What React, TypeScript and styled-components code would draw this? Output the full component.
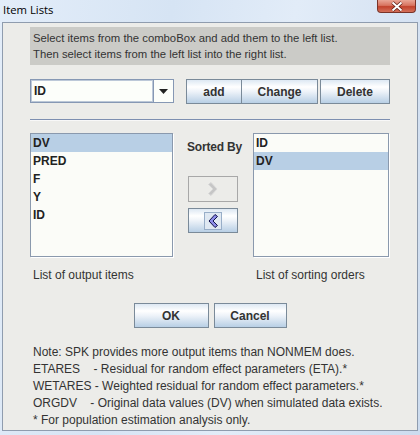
import React from "react";
import styled, { createGlobalStyle } from "styled-components";

const GlobalStyle = createGlobalStyle`
  html, body { margin: 0; padding: 0; }
  body {
    width: 420px; height: 435px; overflow: hidden;
    font-family: "Liberation Sans", Arial, sans-serif;
  }
`;

const Window = styled.div`
  width: 420px;
  height: 435px;
  box-sizing: border-box;
  padding: 0 2px 4px 2px;
  display: flex;
  flex-direction: column;
  background: linear-gradient(100deg, #e3edf9 0%, #d6e4f4 35%, #e2ecf8 60%, #cddcef 100%);
`;

const TitleBar = styled.div`
  height: 22px;
  display: flex;
  align-items: flex-start;
`;

const Title = styled.span`
  font-family: "Open Sans", "Noto Sans", sans-serif;
  font-size: 11.3px;
  line-height: 17px;
  padding: 1px 0 0 1px;
  color: #000;
`;

const CloseButton = styled.div`
  margin-left: auto;
  margin-right: 2px;
  width: 39px;
  height: 13px;
  box-sizing: border-box;
  border: 1px solid #7a3328;
  border-top: none;
  border-radius: 0 0 4px 4px;
  background: linear-gradient(#e9a696 0%, #d87460 45%, #c2422c 55%, #d4705a 100%);
  display: flex;
  align-items: center;
  justify-content: center;
`;

const Panel = styled.div`
  flex: 1;
  box-sizing: border-box;
  border: 1px solid #8f9cae;
  background: #ecece9;
  padding: 4px 27px 0 27px;
  display: flex;
  flex-direction: column;
  color: #333333;
  font-size: 12px;
`;

const Instructions = styled.div`
  height: 38px;
  box-sizing: border-box;
  background: #cbcbc7;
  padding: 3px 0 0 3px;
  font-size: 11.3px;
  line-height: 16px;
`;

const ComboRow = styled.div`
  margin-top: 14px;
  height: 25px;
  display: flex;
  align-items: flex-start;
`;

const Combo = styled.div`
  width: 144px;
  height: 24px;
  box-sizing: border-box;
  display: flex;
  margin-right: 12px;
`;

const ComboField = styled.div`
  flex: 1;
  box-sizing: border-box;
  border: 1px solid #8698b4;
  box-shadow: inset 0 0 0 1px #bcc8d8;
  background: #fcfefa;
  font-weight: bold;
  line-height: 22px;
  padding-left: 3px;
  color: #222;
`;

const ComboArrow = styled.div`
  width: 20px;
  box-sizing: border-box;
  border: 1px solid #8698b4;
  border-left: none;
  background: #fcfefa;
  display: flex;
  align-items: center;
  justify-content: center;
`;

const Button = styled.button<{ $w: number; $h?: number; $ml?: number }>`
  width: ${(p) => p.$w}px;
  height: ${(p) => p.$h ?? 25}px;
  margin: 0 0 0 ${(p) => p.$ml ?? 0}px;
  padding: 0;
  box-sizing: border-box;
  border: 1px solid #7a8a99;
  background: linear-gradient(#dde8f3 0%, #ffffff 30%, #eef3f9 50%, #b8cfe5 100%);
  font-family: "Liberation Sans", Arial, sans-serif;
  font-size: 12px;
  font-weight: bold;
  color: #333333;
  display: flex;
  align-items: center;
  justify-content: center;
`;

const DisabledButton = styled(Button)`
  border-color: #a8a8a8;
  background: #ecece9;
`;

const Separator = styled.div`
  margin-top: 15px;
  height: 1px;
  background: #7d8fb0;
  border-bottom: 1px solid #f8f8f8;
`;

const ListsGrid = styled.div`
  margin-top: 12px;
  display: grid;
  grid-template-columns: 143px 80px 136px;
  grid-template-rows: 124px auto;
`;

const List = styled.div`
  box-sizing: border-box;
  border: 1px solid #8a99ad;
  box-shadow: 1px 1px 0 #ffffff;
  background: #fbfcf8;
  display: flex;
  flex-direction: column;
`;

const ListItem = styled.div<{ $selected?: boolean }>`
  height: 18px;
  line-height: 18px;
  padding-left: 2px;
  font-weight: bold;
  color: #222;
  background: ${(p) => (p.$selected ? "#b8cfe5" : "transparent")};
`;

const Middle = styled.div`
  padding-left: 14px;
  display: flex;
  flex-direction: column;
`;

const SortedBy = styled.div`
  margin-top: 7px;
  line-height: 15px;
  font-weight: bold;
  letter-spacing: -0.2px;
`;

const ArrowStack = styled.div`
  margin: 21px 0 0 1px;
  display: flex;
  flex-direction: column;
  gap: 6px;
`;

const Caption = styled.div`
  margin-top: 10px;
  line-height: 16px;
  padding-left: 3px;
`;

const DialogButtons = styled.div`
  margin-top: 20px;
  display: flex;
  justify-content: center;
  gap: 5px;
`;

const Notes = styled.div`
  margin-top: 16px;
  line-height: 17px;
  padding-left: 3px;
  white-space: pre;
`;

const ChevronLeft = () => (
  <svg width="18" height="18" viewBox="0 0 18 18">
    <rect x="0.5" y="0.5" width="17" height="17" fill="#dfe8f2" stroke="#98aec8" />
    <path d="M11 2.5 L5 9 L11 15.5 L13.5 13.5 L9 9 L13.5 4.5 Z" fill="#8c8ce8" stroke="#10104a" strokeWidth="1" strokeLinejoin="miter" />
  </svg>
);

const ChevronRight = () => (
  <svg width="18" height="18" viewBox="0 0 18 18">
    <path d="M7 2.5 L13 9 L7 15.5 L4.5 13.5 L9 9 L4.5 4.5 Z" fill="#c6c6c6" stroke="#d8d8d8" strokeWidth="1" />
  </svg>
);

const leftItems = ["DV", "PRED", "F", "Y", "ID"];
const rightItems = ["ID", "DV"];

export default function App() {
  return (
    <>
      <GlobalStyle />
      <Window>
        <TitleBar>
          <Title>Item Lists</Title>
          <CloseButton>
            <svg width="14" height="11" viewBox="0 0 14 11">
              <path d="M2.5 1.5 L11.5 9.5 M11.5 1.5 L2.5 9.5" stroke="#5a1a10" strokeWidth="3.4" />
              <path d="M2.5 1.5 L11.5 9.5 M11.5 1.5 L2.5 9.5" stroke="#ffffff" strokeWidth="2" />
            </svg>
          </CloseButton>
        </TitleBar>
        <Panel>
          <Instructions>
            Select items from the comboBox and add them to the left list.
            <br />
            Then select items from the left list into the right list.
          </Instructions>
          <ComboRow>
            <Combo>
              <ComboField>ID</ComboField>
              <ComboArrow>
                <svg width="9" height="5" viewBox="0 0 9 5">
                  <path d="M0 0 H9 L4.5 5 Z" fill="#222" />
                </svg>
              </ComboArrow>
            </Combo>
            <Button $w={56}>add</Button>
            <Button $w={77} $ml={-1}>Change</Button>
            <Button $w={70} $ml={2}>Delete</Button>
          </ComboRow>
          <Separator />
          <ListsGrid>
            <List>
              {leftItems.map((it, i) => (
                <ListItem key={it} $selected={i === 0}>{it}</ListItem>
              ))}
            </List>
            <Middle>
              <SortedBy>Sorted By</SortedBy>
              <ArrowStack>
                <DisabledButton $w={50} $h={26}>
                  <ChevronRight />
                </DisabledButton>
                <Button $w={50} $h={25}>
                  <ChevronLeft />
                </Button>
              </ArrowStack>
            </Middle>
            <List>
              {rightItems.map((it, i) => (
                <ListItem key={it} $selected={i === 1}>{it}</ListItem>
              ))}
            </List>
            <Caption>List of output items</Caption>
            <div />
            <Caption>List of sorting orders</Caption>
          </ListsGrid>
          <DialogButtons>
            <Button $w={75}>OK</Button>
            <Button $w={73}>Cancel</Button>
          </DialogButtons>
          <Notes>
            {"Note: SPK provides more output items than NONMEM does.\n"}
            {"ETARES    - Residual for random effect parameters (ETA).*\n"}
            {"WETARES - Weighted residual for random effect parameters.*\n"}
            {"ORGDV    - Original data values (DV) when simulated data exists.\n"}
            {"* For population estimation analysis only."}
          </Notes>
        </Panel>
      </Window>
    </>
  );
}
